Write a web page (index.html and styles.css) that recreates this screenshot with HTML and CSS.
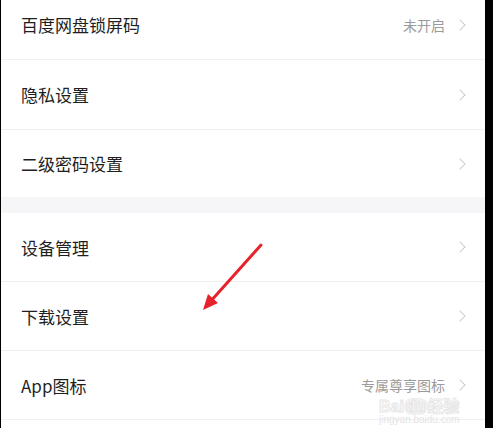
FILE: index.html
```html
<!DOCTYPE html>
<html lang="zh-CN">
	<head>
		<meta charset="UTF-8" />
		<meta name="viewport" content="width=device-width, initial-scale=1.0" />
		<title>设置</title>
		<link rel="stylesheet" href="styles.css">
	</head>
	<body>
		<div id="screen">
			<div class="list list-first">
				<div class="row">
					<span class="row-title">百度网盘锁屏码</span>
					<span class="row-value">未开启</span>
					<span class="chevron"></span>
				</div>
				<div class="row">
					<span class="row-title">隐私设置</span>
					<span class="chevron"></span>
				</div>
				<div class="row row-last">
					<span class="row-title">二级密码设置</span>
					<span class="chevron"></span>
				</div>
			</div>
			<div class="group-gap"></div>
			<div class="list list-second">
				<div class="row">
					<span class="row-title">设备管理</span>
					<span class="chevron"></span>
				</div>
				<div class="row">
					<span class="row-title">下载设置</span>
					<span class="chevron"></span>
				</div>
				<div class="row">
					<span class="row-title">App图标</span>
					<span class="row-value">专属尊享图标</span>
					<span class="chevron"></span>
				</div>
				<div class="row"></div>
			</div>

			<!-- стрелка-указатель поверх списка -->
			<svg class="pointer" width="70" height="75" viewBox="0 0 70 75">
				<line x1="61" y1="6" x2="10" y2="63" stroke="#e8222b" stroke-width="3" stroke-linecap="round" />
				<polygon points="3,71 8,55 18,64" fill="#e8222b" />
			</svg>

			<div class="watermark">
				<span class="watermark-logo">Bai<span class="watermark-du">du</span>经验</span>
				<span class="watermark-url">jingyan.baidu.com</span>
			</div>
		</div>
	</body>
</html>
```

FILE: styles.css
```css
:root {
	--text-color: #1f1f1f;
	--muted-color: #9b9b9b;
	--chevron-color: #cfcfcf;
	--line-color: #f0f0f0;
	--gap-color: #f6f6f9;
}
body {
	margin: 0;
	padding: 0;
	background-color: #000;
	font-family: "Noto Sans CJK SC", "Noto Sans", sans-serif;
}
#screen {
	position: relative;
	width: 484px;
	height: 428px;
	margin-left: 1px;
	overflow: hidden;
	background-color: #fff;
}
.list-first {
	margin-top: -10px;
}
.row {
	display: flex;
	align-items: center;
	height: 69px;
	padding: 0 18px 0 20px;
	border-bottom: 1px solid var(--line-color);
}
.list-second .row {
	height: 68px;
}
.row-last {
	height: 67px;
	border-bottom: none;
}
.row-title {
	flex: 1;
	font-size: 17px;
	color: var(--text-color);
}
.row-value {
	font-size: 14px;
	line-height: 16px;
	color: var(--muted-color);
	margin-right: 11px;
}
.chevron {
	width: 7px;
	height: 7px;
	margin-right: 3px;
	border-top: 1px solid var(--chevron-color);
	border-right: 1px solid var(--chevron-color);
	transform: rotate(45deg);
}
.group-gap {
	height: 16px;
	background-color: var(--gap-color);
}
.pointer {
	position: absolute;
	left: 199px;
	top: 239px;
}
.watermark {
	position: absolute;
	left: 378px;
	top: 399px;
	display: flex;
	flex-direction: column;
	align-items: center;
	font-family: "Liberation Sans", "Noto Sans CJK SC", sans-serif;
}
.watermark-logo {
	font-size: 16px;
	font-weight: bold;
	line-height: 15px;
	color: rgba(255, 255, 255, 0.6);
	-webkit-text-stroke: 1px #e6e6e6;
}
.watermark-du {
	padding: 0 2px;
	border-radius: 8px;
	background-color: rgba(230, 230, 230, 0.6);
}
.watermark-url {
	font-size: 10px;
	line-height: 12px;
	color: #e4e4e4;
}
```
